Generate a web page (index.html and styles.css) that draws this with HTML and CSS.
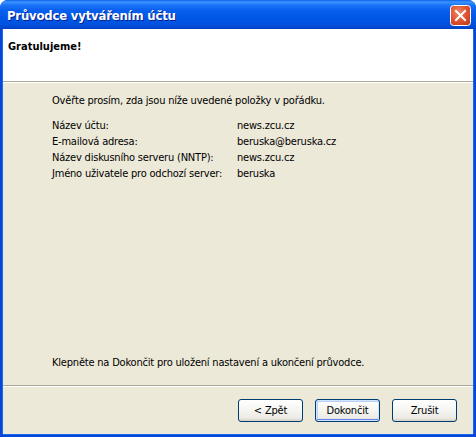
FILE: index.html
```html
<!DOCTYPE html>
<html lang="cs">
<head>
<meta charset="utf-8">
<title>Průvodce vytvářením účtu</title>
<link rel="stylesheet" href="styles.css">
</head>
<body>
<div class="window">
  <div class="titlebar">
    <span class="title">Průvodce vytvářením účtu</span>
    <span class="close" aria-label="Zavřít">
      <svg width="21" height="21" viewBox="0 0 21 21">
        <defs>
          <radialGradient id="cg" cx="0.4" cy="0.35" r="0.8">
            <stop offset="0" stop-color="#EE8A68"/>
            <stop offset="0.55" stop-color="#E0512E"/>
            <stop offset="1" stop-color="#C13A1C"/>
          </radialGradient>
        </defs>
        <rect x="0.5" y="0.5" width="20" height="20" rx="3" fill="url(#cg)" stroke="#FFFFFF"/>
        <path d="M6 6 L15 15 M15 6 L6 15" stroke="#FFFFFF" stroke-width="2" stroke-linecap="square"/>
      </svg>
    </span>
  </div>
  <div class="client">
    <div class="header">
      <div class="heading">Gratulujeme!</div>
    </div>
    <div class="content">
      <p class="intro">Ověřte prosím, zda jsou níže uvedené položky v pořádku.</p>
      <div class="summary">
        <span>Název účtu:</span><span>news.zcu.cz</span>
        <span>E-mailová adresa:</span><span>beruska@beruska.cz</span>
        <span>Název diskusního serveru (NNTP):</span><span>news.zcu.cz</span>
        <span>Jméno uživatele pro odchozí server:</span><span>beruska</span>
      </div>
      <p class="finish">Klepněte na Dokončit pro uložení nastavení a ukončení průvodce.</p>
    </div>
    <div class="footer">
      <button class="btn">&lt; Zpět</button>
      <button class="btn default">Dokončit</button>
      <button class="btn">Zrušit</button>
    </div>
  </div>
</div>
</body>
</html>
```
FILE: styles.css
```css
html, body {
  margin: 0;
  padding: 0;
  background: #FFFFFF;
}

.window {
  width: 476px;
  height: 437px;
  box-sizing: border-box;
  display: flex;
  flex-direction: column;
  border-radius: 8px 8px 0 0;
  overflow: hidden;
  background: #0846D8;
  font-family: "DejaVu Sans Condensed", "DejaVu Sans", sans-serif;
  font-size: 11px;
  letter-spacing: -0.2px;
  color: #000000;
}

.titlebar {
  height: 29px;
  flex: none;
  display: flex;
  align-items: center;
  justify-content: space-between;
  padding: 0 5px 0 7px;
  background: linear-gradient(to bottom, #0A5FEE 0px, #3D95FF 2px, #1B74F8 5px, #0A60EE 10px, #0057E5 18px, #0053E0 24px, #0045CC 28px, #003AB8 29px);
}

.title {
  color: #FFFFFF;
  font-weight: bold;
  font-size: 13px;
  letter-spacing: -0.2px;
  text-shadow: 1px 1px 0 #0A1E8C;
  padding-top: 1px;
}

.close {
  display: flex;
  width: 21px;
  height: 21px;
  margin-top: 2px;
}

.client {
  flex: 1;
  display: flex;
  flex-direction: column;
  margin: 0 3px 3px 3px;
  background: #ECE9D8;
  box-shadow: -1px 0 0 #166AEE, 1px 0 0 #166AEE, 0 1px 0 #166AEE;
}

.header {
  height: 53px;
  flex: none;
  box-sizing: border-box;
  background: #FFFFFF;
  padding: 11px 0 0 5px;
  border-bottom: 1px solid #ACA899;
  box-shadow: 0 1px 0 #FFFFFF;
}

.heading {
  font-weight: bold;
  line-height: 14px;
  letter-spacing: 0;
}

.content {
  flex: 1;
  display: flex;
  flex-direction: column;
  padding: 11px 20px 14px 49px;
}

.intro {
  margin: 0;
  line-height: 16px;
}

.summary {
  margin-top: 9px;
  display: grid;
  grid-template-columns: 185px 1fr;
  line-height: 16px;
}

.finish {
  margin: auto 0 0 0;
  line-height: 16px;
}

.footer {
  height: 49px;
  flex: none;
  box-sizing: border-box;
  border-top: 1px solid #ACA899;
  box-shadow: inset 0 1px 0 #FFFFFF;
  display: flex;
  justify-content: flex-end;
  gap: 12px;
  padding: 13px 16px 0 0;
}

.btn {
  width: 65px;
  height: 23px;
  box-sizing: border-box;
  border: 1px solid #003C74;
  border-radius: 3px;
  background: linear-gradient(to bottom, #FFFFFF 0%, #F7F7F4 40%, #ECEBE6 85%, #D6D0C5 100%);
  font-family: "DejaVu Sans Condensed", "DejaVu Sans", sans-serif;
  font-size: 11px;
  letter-spacing: -0.2px;
  color: #000000;
  padding: 0;
}

.btn.default {
  box-shadow: inset 0 0 0 1px #CEE7FF, inset 0 -1px 0 1px #6982EE, inset 1px 1px 0 1px #B9D1FA;
}
```
